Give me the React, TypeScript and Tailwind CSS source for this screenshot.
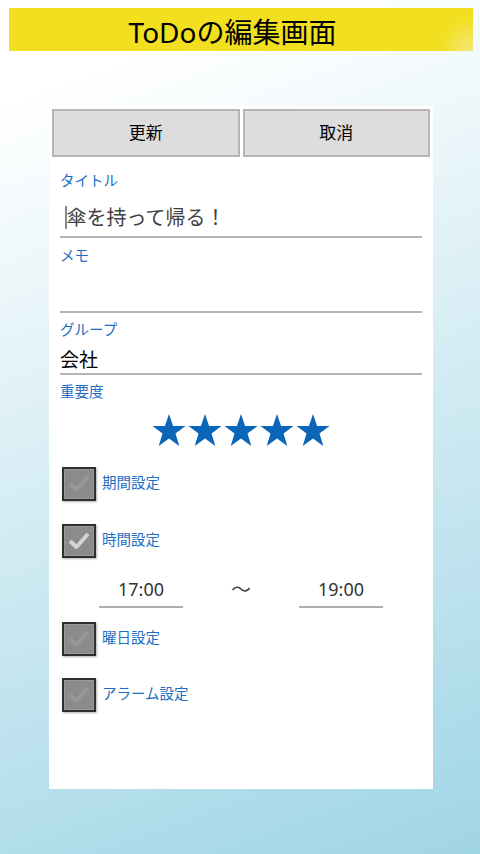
const FONT = "font-['Noto_Sans','Noto_Sans_CJK_JP',sans-serif]";

function Star() {
    return (
        <svg width="36" height="34" viewBox="0 0 36 34">
            <polygon
                points="18,1 22.1,13 34.5,13 24.5,20.6 28.3,33 18,25.4 7.7,33 11.5,20.6 1.5,13 13.9,13"
                fill="#0a66b8"
            />
        </svg>
    );
}

function CheckBox({ checked, label }: { checked: boolean; label: string }) {
    return (
        <div className="flex items-center h-[34px]">
            <div className="w-[34px] h-[34px] border-2 border-[#2f2f2f] bg-[#8b8b8b] shadow-[1px_1px_2px_rgba(0,0,0,0.3),inset_0_0_0_1px_#9a9a9a] flex items-center justify-center">
                <svg width="24" height="22" viewBox="0 0 24 22">
                    <polyline
                        points="3,11 9.5,17 21,4"
                        fill="none"
                        stroke={checked ? "#d4d4d4" : "#989898"}
                        strokeWidth="4"
                        strokeLinejoin="round"
                    />
                </svg>
            </div>
            <span className="ml-[6px] -mt-[3px] text-[14.5px] text-[#1b6ec2]">{label}</span>
        </div>
    );
}

export default function App() {
    return (
        <div className={`${FONT} h-[854px] w-[480px] overflow-hidden bg-linear-[160deg] from-white from-10% to-[#a0d5e6]`}>
            {/* title bar */}
            <div className="pt-[8px] pl-[9px] pr-[7px]">
                <div className="h-[43px] bg-[radial-gradient(circle_at_100%_100%,#f3e77c_0px,#f2df1f_34px)] flex items-center justify-center pr-[17px] pt-1">
                    <span className="text-[28px] leading-none text-black">ToDoの編集画面</span>
                </div>
            </div>

            {/* card */}
            <div className="mt-[55px] ml-[49px] w-[384px] h-[683px] bg-white">
                <div className="flex gap-[3px] pt-[3px] pl-[3px] pr-[3px]">
                    <button className="flex-1 h-[48px] bg-[#dcdddc] border-2 border-[#b6b6b6] text-[17px] text-black">
                        更新
                    </button>
                    <button className="flex-1 h-[48px] bg-[#dcdddc] border-2 border-[#b6b6b6] text-[17px] text-black">
                        取消
                    </button>
                </div>

                <div className="pl-[11px] pr-[11px]">
                    <div className="h-[22px] mt-[13px] flex items-center text-[14.5px] text-[#1b6ec2]">タイトル</div>
                    <div className="h-[46px] pt-[7px] flex items-center border-b-2 border-[#b4b4b4]">
                        <span className="w-[1.5px] h-[23px] bg-[#888] ml-[5px]" />
                        <span className="text-[20px] text-[#404040]">傘を持って帰る！</span>
                    </div>

                    <div className="h-[36px] flex items-center text-[14.5px] text-[#1b6ec2]">メモ</div>
                    <div className="h-[39px] border-b-2 border-[#b4b4b4]" />

                    <div className="h-[34px] flex items-center text-[14.5px] text-[#1b6ec2]">グループ</div>
                    <div className="h-[28px] flex items-center border-b-2 border-[#b4b4b4]">
                        <span className="text-[19px] text-black">会社</span>
                    </div>

                    <div className="h-[34px] flex items-center text-[14.5px] text-[#1b6ec2]">重要度</div>
                    <div className="h-[42px] flex items-center justify-center">
                        <Star />
                        <Star />
                        <Star />
                        <Star />
                        <Star />
                    </div>

                    <div className="pt-[16px] pl-[2px]">
                        <CheckBox checked={false} label="期間設定" />
                        <div className="mt-[23px]">
                            <CheckBox checked={true} label="時間設定" />
                        </div>

                        <div className="mt-[14px] flex items-center text-[18px] text-[#333]">
                            <div className="ml-[37px] w-[84px] h-[36px] border-b-2 border-[#b0b0b0] flex items-center justify-center">
                                17:00
                            </div>
                            <div className="w-[116px] text-center text-[20px] text-[#444]">〜</div>
                            <div className="w-[84px] h-[36px] border-b-2 border-[#b0b0b0] flex items-center justify-center">
                                19:00
                            </div>
                        </div>

                        <div className="mt-[14px]">
                            <CheckBox checked={false} label="曜日設定" />
                        </div>
                        <div className="mt-[22px]">
                            <CheckBox checked={false} label="アラーム設定" />
                        </div>
                    </div>
                </div>
            </div>
        </div>
    );
}
